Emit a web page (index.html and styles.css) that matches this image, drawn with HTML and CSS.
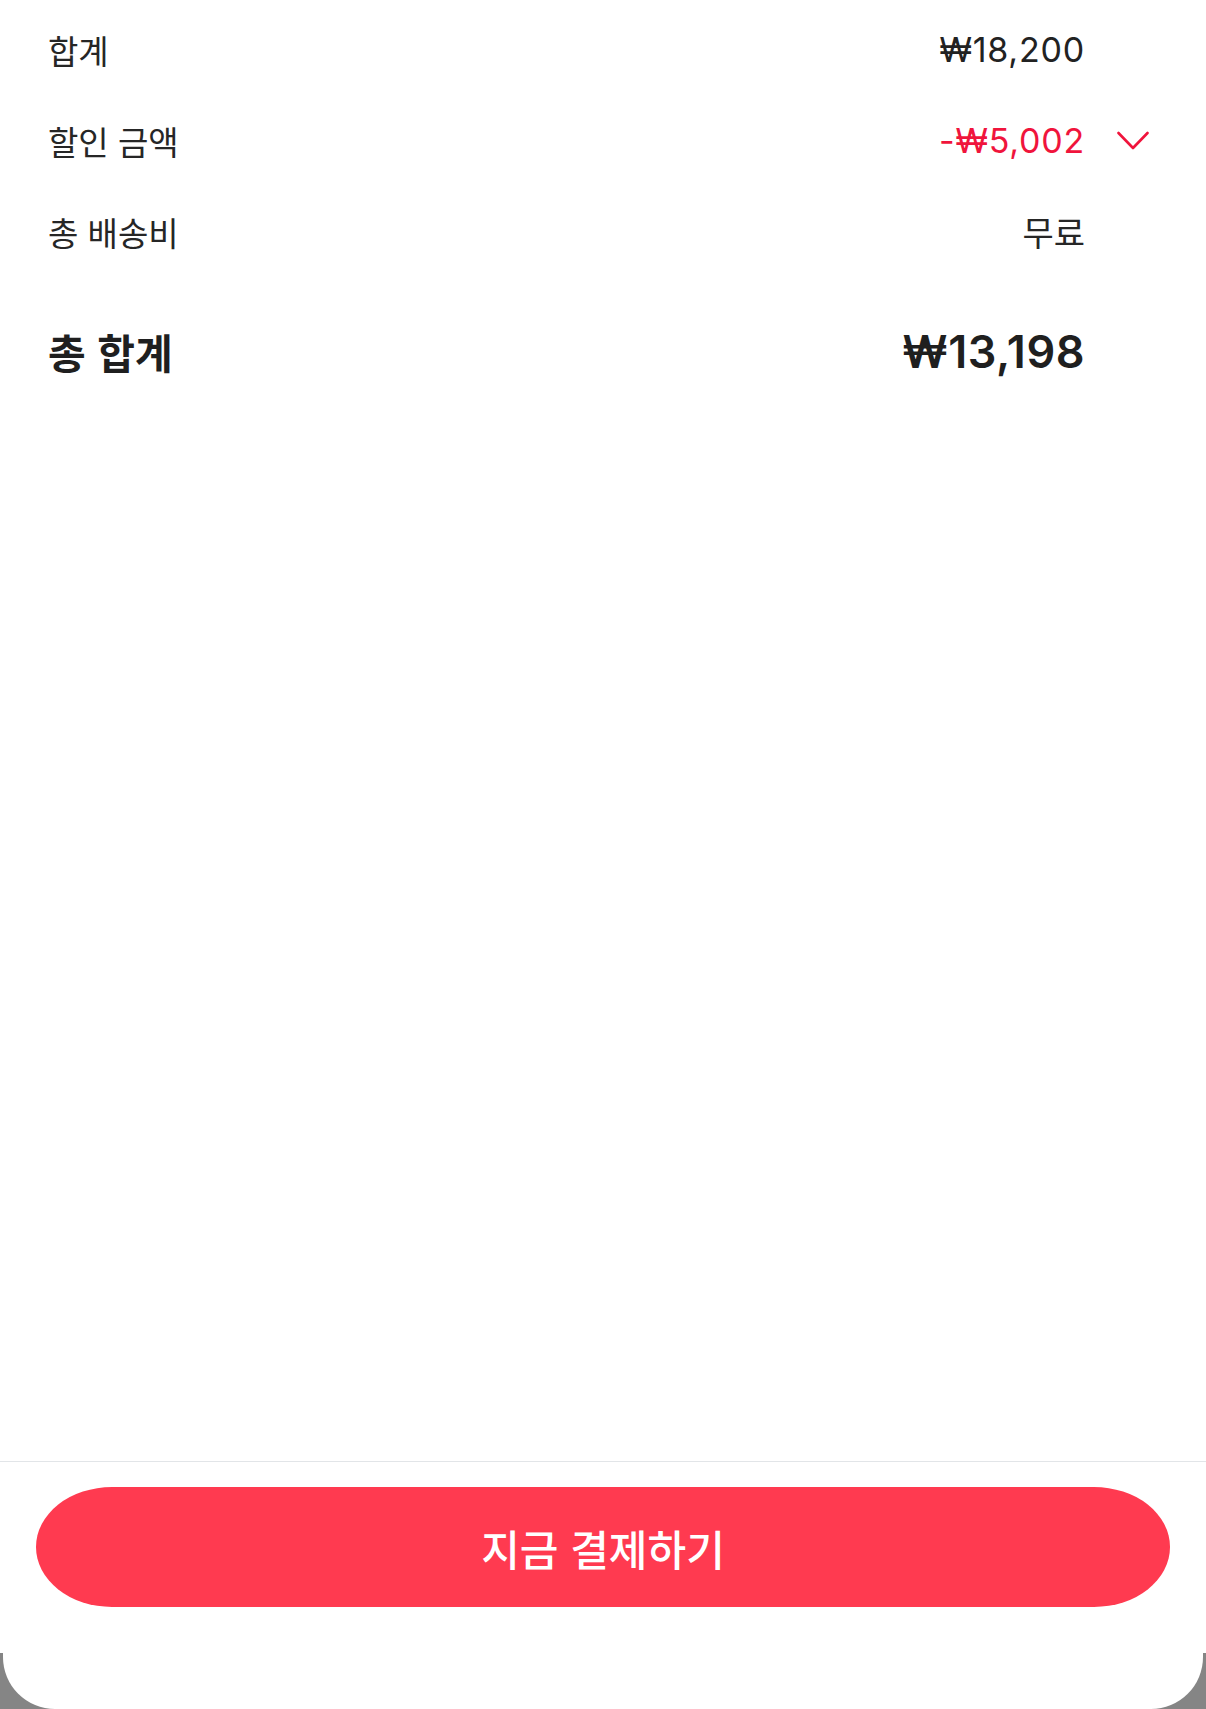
FILE: index.html
```html
<!DOCTYPE html>
<html lang="ko">
<head>
    <meta charset="UTF-8">
    <meta name="viewport" content="width=device-width, initial-scale=1.0">
    <title>주문 결제</title>
    <link rel="stylesheet" href="styles.css">
</head>
<body>
    <div class="summary">
        <div class="row">
            <span class="label">합계</span>
            <span class="amount">₩18,200</span>
            <span class="toggle"></span>
        </div>
        <div class="row">
            <span class="label">할인 금액</span>
            <span class="amount discount">-₩5,002</span>
            <span class="toggle">
                <svg width="32" height="20" viewBox="0 0 32 20" fill="none">
                    <polyline points="1.5,2 16,17 30.5,2" stroke="#f0143c" stroke-width="2.6" stroke-linecap="round" stroke-linejoin="round"/>
                </svg>
            </span>
        </div>
        <div class="row">
            <span class="label">총 배송비</span>
            <span class="note">무료</span>
            <span class="toggle"></span>
        </div>
        <div class="row total">
            <span class="label">총 합계</span>
            <span class="amount">₩13,198</span>
            <span class="toggle"></span>
        </div>
    </div>

    <div class="footer">
        <a href="#" class="pay-button">지금 결제하기</a>
        <div class="home-area">
            <div class="sheet-edge">
                <div class="sheet-inner"></div>
            </div>
        </div>
    </div>
</body>
</html>
```

FILE: styles.css
```css
html, body {
    height: 100%;
}
body {
    font-family: Inter, "Noto Sans CJK KR", sans-serif;
    margin: 0;
    padding: 0;
    background-color: #ffffff;
    color: #222222;
    display: flex;
    flex-direction: column;
}
.summary {
    flex: 1;
    padding: 4px 57px 0 48px;
}
.row {
    display: flex;
    align-items: center;
    height: 91px;
}
.row .label {
    flex: 1;
    font-family: "Noto Sans CJK KR", sans-serif;
    font-size: 33px;
    color: #262626;
}
.amount {
    font-size: 34px;
    letter-spacing: 0.8px;
    color: #222222;
}
.note {
    font-family: "Noto Sans CJK KR", sans-serif;
    font-size: 34px;
    color: #262626;
}
.discount {
    color: #f0143c;
}
.toggle {
    width: 64px;
    display: flex;
    justify-content: flex-end;
    align-items: center;
}
.row.total {
    margin-top: 24px;
    height: 100px;
}
.row.total .label {
    font-size: 41px;
    font-weight: 700;
    color: #1f1f1f;
}
.row.total .amount {
    font-size: 45px;
    font-weight: 600;
    letter-spacing: 0.5px;
    color: #1f1f1f;
}
.footer {
    border-top: 1px solid #e2e5e8;
    padding: 25px 36px 0;
}
.pay-button {
    display: flex;
    align-items: center;
    justify-content: center;
    height: 120px;
    background-color: #ff3a50;
    color: #ffffff;
    border-radius: 76px / 60px;
    font-family: "Noto Sans CJK KR", sans-serif;
    font-size: 42px;
    font-weight: 500;
    text-decoration: none;
}
.home-area {
    height: 102px;
    margin: 0 -36px;
    display: flex;
    flex-direction: column;
    justify-content: flex-end;
}
/* rounded bottom of the sheet over the dimmed backdrop */
.sheet-edge {
    height: 56px;
    background-color: #858585;
    display: flex;
}
.sheet-inner {
    flex: 1;
    margin: 0 3px;
    background-color: #ffffff;
    border-radius: 0 0 52px 52px;
}
```
